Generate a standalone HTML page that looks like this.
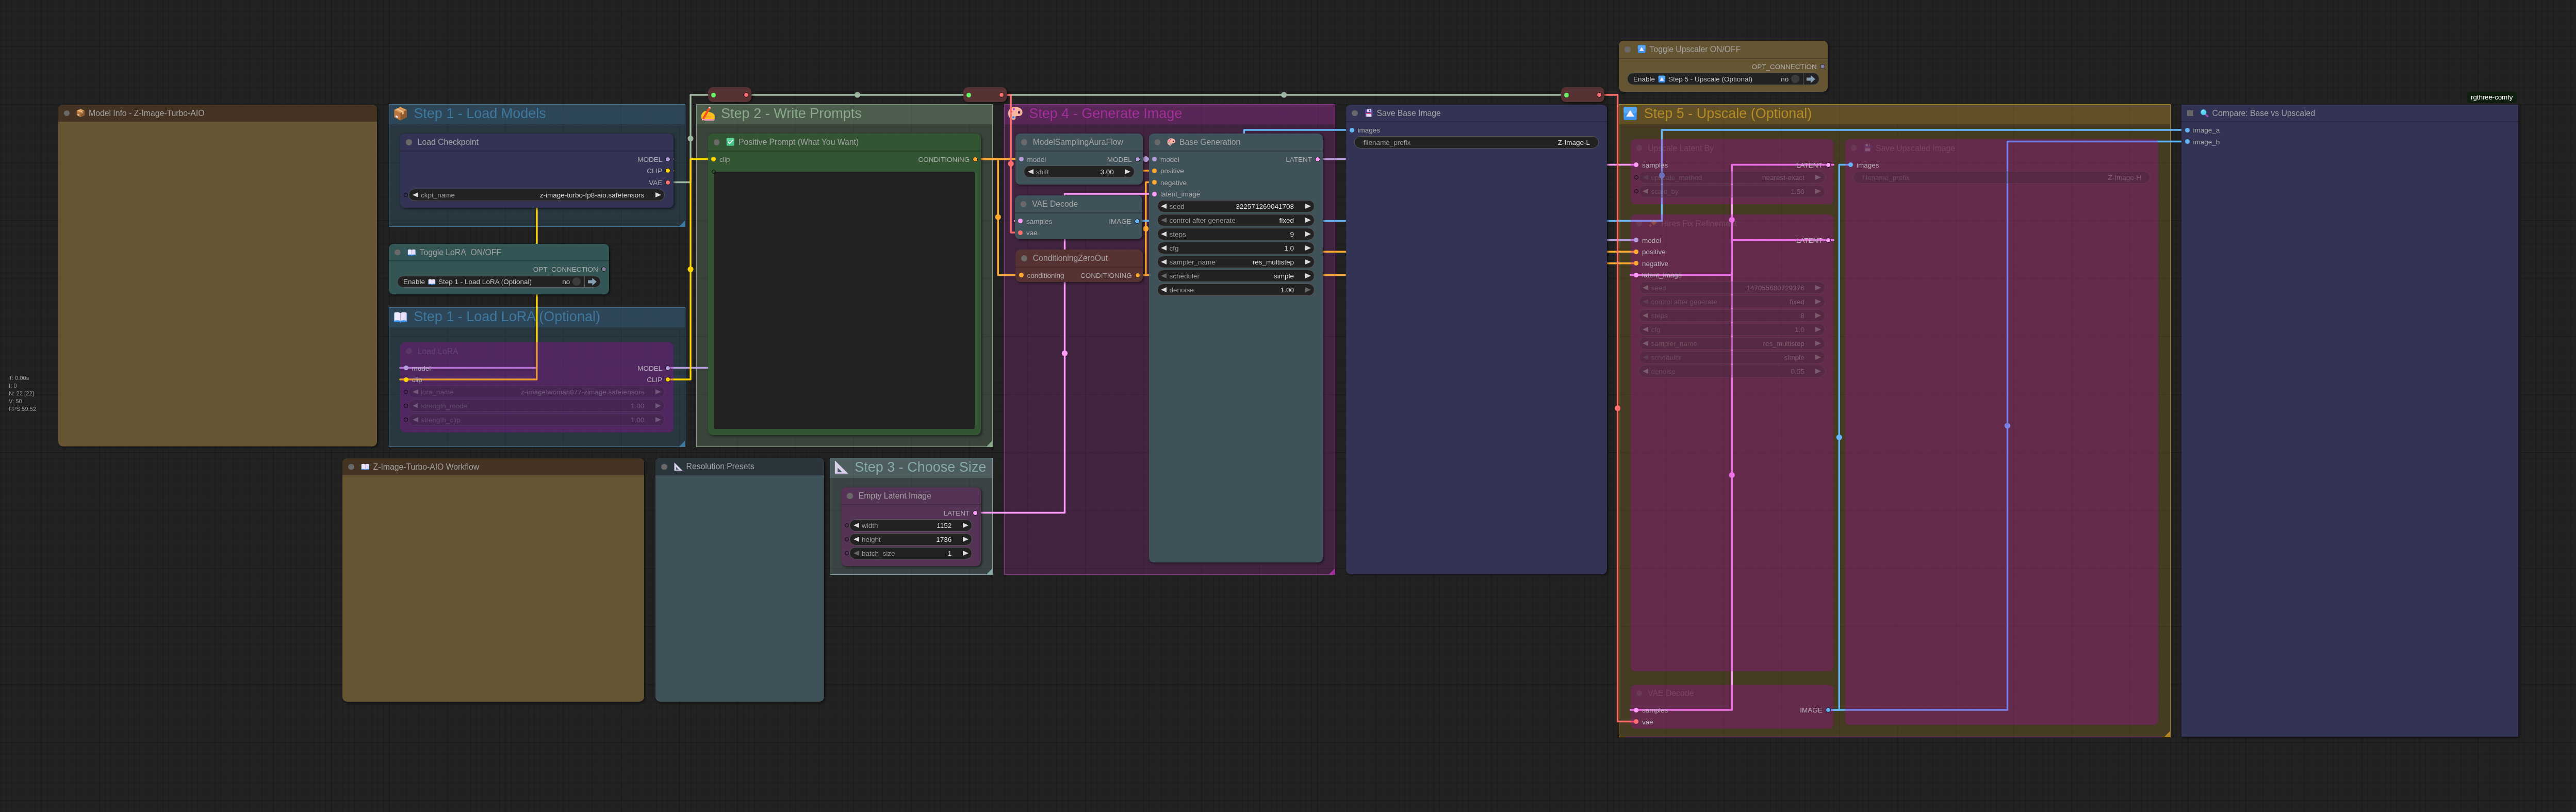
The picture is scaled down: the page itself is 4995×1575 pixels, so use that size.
<!DOCTYPE html>
<html lang="en"><head><meta charset="utf-8"><title>ComfyUI - Z-Image-Turbo-AIO Workflow</title>
<style>
html,body{margin:0;padding:0;background:#222}
#c{position:relative;width:4995px;height:1575px;overflow:hidden;will-change:transform;font-family:"Liberation Sans",Arial,sans-serif;
background-color:#222;
background-image:linear-gradient(90deg,rgba(0,0,0,.11) 2px,transparent 2px),linear-gradient(180deg,rgba(0,0,0,.11) 2px,transparent 2px),linear-gradient(90deg,rgba(0,0,0,.15) 1.200px,transparent 1.200px),linear-gradient(180deg,rgba(0,0,0,.15) 1.200px,transparent 1.200px);
background-size:112.500px 112.500px,112.500px 112.500px,11.250px 11.250px,11.250px 11.250px;
background-position:79px 89.500px,79px 89.500px,79.400px 89.900px,79.400px 89.900px}
#c *{box-sizing:border-box}
.x,.tt,.sl,.wl,.wv{position:absolute;white-space:nowrap;line-height:20px;height:20px}
.ic{position:absolute;display:block}
#links{position:absolute;left:0;top:0}
.g{position:absolute;border:1.300px solid;margin:0}
.gh{position:absolute;left:0;top:0;right:0;height:37.500px}
.gc{position:absolute;right:0;bottom:0;width:0;height:0;border-left:11.250px solid transparent;border-bottom:11.250px solid}
.n{position:absolute;border-radius:9px;box-shadow:2px 2px 5px rgba(0,0,0,.55);margin:0}
.n.box{border-radius:0}
.n.byp{box-shadow:none}
.t{position:absolute;left:0;top:0;right:0;height:33.750px;border-radius:9px 9px 0 0}
.box .t{border-radius:0}
.t.s{height:34.500px;border-bottom:2px solid rgba(0,0,0,.23)}
.td{position:absolute;left:11.250px;top:11.250px;width:11.250px;height:11.250px;border-radius:50%;background:#696969}
.tb{position:absolute;left:11.250px;top:11.250px;width:11.250px;height:11.250px;background:#696969}
.tt{top:7px;font-size:15.750px;color:#a2a2a2}
.byp .td{background:rgba(136,136,136,.17)}
.byp .tt{color:rgba(190,190,190,.19);margin-top:.8px}
.sl{font-size:13.500px;color:#ababab}
.byp .sl{color:#b6b2b6}
.d{position:absolute;width:9px;height:9px;border-radius:50%}
.d.o{width:10px;height:10px;border:1.200px solid #111}
.w{position:absolute;height:23.600px;border-radius:11.800px;background:#222;border:1.100px solid #5c5c5c}
.w.b{background:rgba(34,34,34,.2);border-color:rgba(120,120,120,.2)}
.wl,.wv{top:1.650px;font-size:13.500px}
.wl{color:#999}.wv{color:#ddd}
.b .wl{color:rgba(170,170,170,.28)}.b .wv{color:rgba(221,221,221,.28)}
.al,.ar{position:absolute;top:5.600px;width:0;height:0;border-top:5.600px solid transparent;border-bottom:5.600px solid transparent}
.al{left:6.200px;border-right:11.250px solid #ddd}
.ar{right:6.200px;border-left:11.250px solid #ddd}
.al.dis{border-right-color:#666}.ar.dis{border-left-color:#666}
.b .al{border-right-color:rgba(221,221,221,.28)}.b .ar{border-left-color:rgba(221,221,221,.28)}
.b .al.dis{border-right-color:rgba(120,120,120,.25)}
.ws{position:absolute;width:8px;height:8px;border-radius:50%;border:1.600px solid #050505}
.ta{position:absolute;background:#222;border-radius:3px}
.tg .wv{color:#c4c4c4}
.tc{position:absolute;right:38.200px;top:2.700px;width:16px;height:16px;border-radius:50%;background:#3c3c3c}
.ts{position:absolute;right:30.200px;top:0;width:1px;height:21.400px;background:#5a5a5a}
.rr{border-radius:9px}
#badge{position:absolute;left:4784px;top:178px;width:95.500px;height:22px;border-radius:5px;background:#0f1f0f;color:#fff;font-size:13.500px;line-height:22px;text-align:center;letter-spacing:-.15px}
#stats{position:absolute;left:17px;top:726.300px;margin:0;font-family:"Liberation Sans",Arial,sans-serif;font-size:11.250px;line-height:15.050px;color:#999}
</style></head>
<body><main id="c">
<section class="g" style="left:754px;top:202px;width:575px;height:237.5px;border-color:rgba(63,120,158,.9);background:rgba(63,120,158,.25)">
<div class="gh" style="background:rgba(63,120,158,.25)"></div>
<svg class="ic" style="left:8.2px;top:3.7px;width:27px;height:27px" viewBox="0 0 32 32"><path d="M16 .5 30.500 7.500v16.500L16 31.500 1.500 24V7.500z" fill="#b9773f"/><path d="M16 .5 30.500 7.500 16 14.500 1.500 7.500z" fill="#d99a5b"/><path d="M16 14.500v17l14.500-7.500V7.500z" fill="#8f5a30"/><path d="M8.800 4 23.300 11v5.500l-3.400 1.700v-5.500L5.400 5.700z" fill="#f0c48a"/><path d="M5 19.500l5 2.500v4.200l-5-2.500z" fill="#f3e6f7"/></svg>
<span class="x" style="top:7.24px;font-size:27px;color:#3f789e;left:47.2px;">Step 1 - Load Models</span>
<i class="gc" style="border-bottom-color:#3f789e"></i>
</section>
<section class="g" style="left:754px;top:596px;width:575px;height:271px;border-color:rgba(63,120,158,.9);background:rgba(63,120,158,.25)">
<div class="gh" style="background:rgba(63,120,158,.25)"></div>
<svg class="ic" style="left:8.2px;top:3.7px;width:27px;height:27px" viewBox="0 0 32 32"><path d="M1 8h30v19.500H18.500L16 29.500 13.500 27.500H1z" fill="#3b94ee"/><path d="M2 6.500c5-1.800 10-1.500 14 .8v18.500c-4-2-9-2.300-14-.6z" fill="#efe9fb"/><path d="M30 6.500c-5-1.800-10-1.500-14 .8v18.500c4-2 9-2.300 14-.6z" fill="#e6ddf6"/><path d="M16 7.300v18.500" stroke="#b9a9d6" stroke-width="1.200"/></svg>
<span class="x" style="top:7.24px;font-size:27px;color:#3f789e;left:47.2px;">Step 1 - Load LoRA (Optional)</span>
<i class="gc" style="border-bottom-color:#3f789e"></i>
</section>
<section class="g" style="left:1350px;top:202px;width:575px;height:665px;border-color:rgba(136,170,136,.9);background:rgba(136,170,136,.25)">
<div class="gh" style="background:rgba(136,170,136,.25)"></div>
<svg class="ic" style="left:8.2px;top:3.7px;width:27px;height:27px" viewBox="0 0 32 32"><path d="M1 21C2 14 8 9 14 10l11 4c5 2 7 5 7 10l-1 6c0 1.300-1 2-2 2H10C4 31 0 27 1 21z" fill="#fcc21b"/><path d="M7.500 28.500H31.300l-.3 1.800c0 1-1 1.700-2 1.700H10c-1 0-2-.4-3-1z" fill="#f48fb1"/><path d="M11 21c3-2.500 9-2 13 1.500l-2.500 5c-3-2.500-8-2.500-11 0z" fill="#f9a825"/><path d="M18.800 0 23 2.400 7.200 29.300 2.600 32 3 26.800z" fill="#f4511e"/><path d="M17.500 2.200l4.200 2.400L23 2.400 18.800 0z" fill="#ffcdd2"/><path d="M2.600 32l.4-5.200 4.200 2.500z" fill="#f8bbd0"/></svg>
<span class="x" style="top:7.24px;font-size:27px;color:#88aa88;left:47.1px;">Step 2 - Write Prompts</span>
<i class="gc" style="border-bottom-color:#88aa88"></i>
</section>
<section class="g" style="left:1609px;top:888px;width:316px;height:226.5px;border-color:rgba(136,170,170,.9);background:rgba(136,170,170,.25)">
<div class="gh" style="background:rgba(136,170,170,.25)"></div>
<svg class="ic" style="left:8.2px;top:3.7px;width:27px;height:27px" viewBox="0 0 32 32"><path d="M2.500 1.500 31 30c.6.600.2 1.500-.6 1.500H2.500C1.500 31.500 1 31 1 30V2c0-.8.900-1.100 1.500-.5z" fill="#d9cfe8"/><path d="M7.500 17 17.500 27H7.500z" fill="#46595c"/><path d="M1 29.500h30.500c.4.800 0 2-1.100 2H2.500C1.500 31.500 1 31 1 30z" fill="#b9a9d6"/></svg>
<span class="x" style="top:7.24px;font-size:27px;color:#88aaaa;left:47.2px;">Step 3 - Choose Size</span>
<i class="gc" style="border-bottom-color:#88aaaa"></i>
</section>
<section class="g" style="left:1946.5px;top:202px;width:642.5px;height:912.5px;border-color:rgba(161,48,155,.9);background:rgba(161,48,155,.25)">
<div class="gh" style="background:rgba(161,48,155,.25)"></div>
<svg class="ic" style="left:6.5px;top:2.45px;width:29.5px;height:29.5px" viewBox="0 0 32 32"><path d="M15 2.500C7 2.500 1 8.500 1 16.500c0 7.500 5 13 11.500 13 2.500 0 4-1.200 4-3 0-1.700-.5-2.700.3-3.800 1-1.400 3-1 6-1 5 0 8.200-3 8.200-8C31 7 24 2.500 15 2.500z" fill="#fbb5a0"/><ellipse cx="24" cy="14" rx="2.600" ry="2.900" fill="#5a2a55"/><circle cx="13" cy="7.500" r="2.300" fill="#b44fd8"/><circle cx="7.500" cy="12.500" r="2.200" fill="#f0288a"/><circle cx="7" cy="19.500" r="2.200" fill="#1fb5a8"/><circle cx="12" cy="24.500" r="2.400" fill="#2f8fe8"/></svg>
<span class="x" style="top:7.24px;font-size:27px;color:#a1309b;left:47.7px;">Step 4 - Generate Image</span>
<i class="gc" style="border-bottom-color:#a1309b"></i>
</section>
<section class="g" style="left:3139px;top:202px;width:1070px;height:1227.5px;border-color:rgba(181,139,42,.9);background:rgba(181,139,42,.25)">
<div class="gh" style="background:rgba(181,139,42,.25)"></div>
<svg class="ic" style="left:7.4px;top:3.2px;width:28px;height:28px" viewBox="0 0 32 32"><rect x="1.500" y="1.500" width="29" height="29" rx="4" fill="#3f94f2"/><rect x="1.500" y="1.500" width="29" height="14" rx="4" fill="#56a8f7"/><path d="M16 8.500 25 23H7z" fill="#fbeefd"/></svg>
<span class="x" style="top:7.24px;font-size:27px;color:#b58b2a;left:47.7px;">Step 5 - Upscale (Optional)</span>
<i class="gc" style="border-bottom-color:#b58b2a"></i>
</section>
<svg id="links" width="4995" height="1575" viewBox="0 0 4995 1575" fill="none" stroke-width="3.4" stroke-linejoin="round" stroke-linecap="round">
<path d="M1294.25 308.5 L1305.5 308.5 L1040.75 308.5 L1040.75 713.5 L776 713.5 L787.25 713.5" stroke="#B39DDB"/>
<circle cx="1040.75" cy="511" r="5.6" fill="#B39DDB"/>
<path d="M1294.25 331 L1305.5 331 L1040.75 331 L1040.75 736 L776 736 L787.25 736" stroke="#FFD500"/>
<circle cx="1040.75" cy="533.5" r="5.6" fill="#FFD500"/>
<path d="M1294.25 713.5 L1305.5 713.5 L1637.25 713.5 L1637.25 308.5 L1969 308.5 L1980.25 308.5" stroke="#B39DDB"/>
<circle cx="1637.25" cy="511" r="5.6" fill="#B39DDB"/>
<path d="M1294.25 353.5 L1305.5 353.5 L1339 353.5 L1339 184 L1372.5 184 L1383.75 184" stroke="#9FB8A2"/>
<circle cx="1339" cy="268.75" r="5.6" fill="#9FB8A2"/>
<path d="M1294.25 736 L1305.5 736 L1339 736 L1339 308.5 L1372.5 308.5 L1383.75 308.5" stroke="#FFD500"/>
<circle cx="1339" cy="522.25" r="5.6" fill="#FFD500"/>
<path d="M1446.5 184 L1457.75 184 L1662.62 184 L1662.62 184 L1867.5 184 L1878.75 184" stroke="#9FB8A2"/>
<circle cx="1662.62" cy="184" r="5.6" fill="#9FB8A2"/>
<path d="M1941.5 184 L1952.75 184 L2489.62 184 L2489.62 184 L3026.5 184 L3037.75 184" stroke="#9FB8A2"/>
<circle cx="2489.62" cy="184" r="5.6" fill="#9FB8A2"/>
<path d="M2553.95 308.5 L2565.2 308.5 L2266.35 308.5 L2266.35 428.5 L1967.5 428.5 L1978.75 428.5" stroke="#FF9CF9"/>
<circle cx="2266.35" cy="368.5" r="5.6" fill="#FF9CF9"/>
<path d="M2553.95 308.5 L2565.2 308.5 L2863.35 308.5 L2863.35 319.5 L3161.5 319.5 L3172.75 319.5" stroke="#FF9CF9"/>
<circle cx="2863.35" cy="314" r="5.6" fill="#FF9CF9"/>
<path d="M1890.25 308.5 L1901.5 308.5 L2064.5 308.5 L2064.5 331 L2227.5 331 L2238.75 331" stroke="#FFA931"/>
<circle cx="2064.5" cy="319.75" r="5.6" fill="#FFA931"/>
<path d="M1890.25 308.5 L1901.5 308.5 L1935.25 308.5 L1935.25 533.5 L1969 533.5 L1980.25 533.5" stroke="#FFA931"/>
<circle cx="1935.25" cy="421" r="5.6" fill="#FFA931"/>
<path d="M1890.25 308.5 L1901.5 308.5 L2531.5 308.5 L2531.5 488.3 L3161.5 488.3 L3172.75 488.3" stroke="#FFA931"/>
<circle cx="2531.5" cy="398.4" r="5.6" fill="#FFA931"/>
<path d="M2204.75 308.5 L2216 308.5 L2688.75 308.5 L2688.75 465.8 L3161.5 465.8 L3172.75 465.8" stroke="#B39DDB"/>
<circle cx="2688.75" cy="387.15" r="5.6" fill="#B39DDB"/>
<path d="M2204.75 308.5 L2216 308.5 L2221.75 308.5 L2221.75 308.5 L2227.5 308.5 L2238.75 308.5" stroke="#B39DDB"/>
<circle cx="2221.75" cy="308.5" r="5.6" fill="#B39DDB"/>
<path d="M2204.75 533.5 L2216 533.5 L2221.75 533.5 L2221.75 353.5 L2227.5 353.5 L2238.75 353.5" stroke="#FFA931"/>
<circle cx="2221.75" cy="443.5" r="5.6" fill="#FFA931"/>
<path d="M2204.75 533.5 L2216 533.5 L2688.75 533.5 L2688.75 510.8 L3161.5 510.8 L3172.75 510.8" stroke="#FFA931"/>
<circle cx="2688.75" cy="522.15" r="5.6" fill="#FFA931"/>
<path d="M1890.25 994.5 L1901.5 994.5 L2064.5 994.5 L2064.5 376 L2227.5 376 L2238.75 376" stroke="#FF9CF9"/>
<circle cx="2064.5" cy="685.25" r="5.6" fill="#FF9CF9"/>
<path d="M2203.75 428.5 L2215 428.5 L2412.5 428.5 L2412.5 252 L2610 252 L2621.25 252" stroke="#64B5F6"/>
<circle cx="2412.5" cy="340.25" r="5.6" fill="#64B5F6"/>
<path d="M2203.75 428.5 L2215 428.5 L3222.5 428.5 L3222.5 252 L4230 252 L4241.25 252" stroke="#64B5F6"/>
<circle cx="3222.5" cy="340.25" r="5.6" fill="#64B5F6"/>
<path d="M1941.5 184 L1952.75 184 L1960.12 184 L1960.12 451 L1967.5 451 L1978.75 451" stroke="#FF6E6E"/>
<circle cx="1960.12" cy="317.5" r="5.6" fill="#FF6E6E"/>
<path d="M3100.5 184 L3111.75 184 L3136.62 184 L3136.62 1399.5 L3161.5 1399.5 L3172.75 1399.5" stroke="#FF6E6E"/>
<circle cx="3136.62" cy="791.75" r="5.6" fill="#FF6E6E"/>
<path d="M3543.75 319.5 L3555 319.5 L3358.25 319.5 L3358.25 533.3 L3161.5 533.3 L3172.75 533.3" stroke="#FF9CF9"/>
<circle cx="3358.25" cy="426.4" r="5.6" fill="#FF9CF9"/>
<path d="M3543.75 465.8 L3555 465.8 L3358.25 465.8 L3358.25 1377 L3161.5 1377 L3172.75 1377" stroke="#FF9CF9"/>
<circle cx="3358.25" cy="921.4" r="5.6" fill="#FF9CF9"/>
<path d="M3543.75 1377 L3555 1377 L3566.25 1377 L3566.25 319.5 L3577.5 319.5 L3588.75 319.5" stroke="#64B5F6"/>
<circle cx="3566.25" cy="848.25" r="5.6" fill="#64B5F6"/>
<path d="M3543.75 1377 L3555 1377 L3892.5 1377 L3892.5 274.5 L4230 274.5 L4241.25 274.5" stroke="#64B5F6"/>
<circle cx="3892.5" cy="825.75" r="5.6" fill="#64B5F6"/>
</svg>
<article class="n" style="left:112.5px;top:202.5px;width:618.5px;height:663.5px;background:#665533">
<header class="t" style="background:#443322;">
<i class="td"></i>
<svg class="ic" style="left:35.55px;top:8.32px;width:16.5px;height:16.5px" viewBox="0 0 32 32"><path d="M16 .5 30.500 7.500v16.500L16 31.500 1.500 24V7.500z" fill="#b9773f"/><path d="M16 .5 30.500 7.500 16 14.500 1.500 7.500z" fill="#d99a5b"/><path d="M16 14.500v17l14.500-7.500V7.500z" fill="#8f5a30"/><path d="M8.800 4 23.300 11v5.500l-3.400 1.700v-5.500L5.400 5.700z" fill="#f0c48a"/><path d="M5 19.500l5 2.500v4.200l-5-2.500z" fill="#f3e6f7"/></svg>
<span class="tt" style="left:59.55px">Model Info - Z-Image-Turbo-AIO</span>
</header>
</article>
<article class="n" style="left:664px;top:888.5px;width:585px;height:472.5px;background:#665533">
<header class="t" style="background:#443322;">
<i class="td"></i>
<svg class="ic" style="left:35.55px;top:8.32px;width:16.5px;height:16.5px" viewBox="0 0 32 32"><path d="M1 8h30v19.500H18.500L16 29.500 13.500 27.500H1z" fill="#3b94ee"/><path d="M2 6.500c5-1.800 10-1.500 14 .8v18.500c-4-2-9-2.300-14-.6z" fill="#efe9fb"/><path d="M30 6.500c-5-1.800-10-1.500-14 .8v18.500c4-2 9-2.300 14-.6z" fill="#e6ddf6"/><path d="M16 7.300v18.500" stroke="#b9a9d6" stroke-width="1.200"/></svg>
<span class="tt" style="left:59.55px">Z-Image-Turbo-AIO Workflow</span>
</header>
</article>
<article class="n" style="left:1271px;top:888.3px;width:326.8px;height:472.7px;background:#3f5159">
<header class="t" style="background:#2a363b;">
<i class="td"></i>
<svg class="ic" style="left:35.55px;top:8.32px;width:16.5px;height:16.5px" viewBox="0 0 32 32"><path d="M2.500 1.500 31 30c.6.600.2 1.500-.6 1.500H2.500C1.500 31.500 1 31 1 30V2c0-.8.900-1.100 1.500-.5z" fill="#d9cfe8"/><path d="M7.500 17 17.500 27H7.500z" fill="#46595c"/><path d="M1 29.500h30.500c.4.800 0 2-1.100 2H2.500C1.500 31.500 1 31 1 30z" fill="#b9a9d6"/></svg>
<span class="tt" style="left:59.55px">Resolution Presets</span>
</header>
</article>
<article class="n" style="left:776px;top:259px;width:529.5px;height:143.5px;background:#333355">
<header class="t s" style="">
<i class="td"></i>
<span class="tt" style="left:33.75px">Load Checkpoint</span>
</header>
<i class="d o" style="left:514.05px;top:44.5px;background:#B39DDB"></i>
<span class="sl r" style="right:21.3px;top:40.6px">MODEL</span>
<i class="d o" style="left:514.05px;top:67px;background:#FFD500"></i>
<span class="sl r" style="right:21.3px;top:63.1px">CLIP</span>
<i class="d o" style="left:514.05px;top:89.5px;background:#FF6E6E"></i>
<span class="sl r" style="right:21.3px;top:85.6px">VAE</span>
<div class="w" style="left:16.33px;top:107.2px;width:496.85px"><i class="al"></i><i class="ar"></i><span class="wl" style="left:22.6px">ckpt_name</span><span class="wv" style="right:38.9px">z-image-turbo-fp8-aio.safetensors</span></div><i class="ws" style="left:7.25px;top:115px"></i>
</article>
<article class="n" style="left:754px;top:472.5px;width:427px;height:98.5px;background:#335555">
<header class="t s" style="">
<i class="td"></i>
<svg class="ic" style="left:35.55px;top:8.32px;width:16.5px;height:16.5px" viewBox="0 0 32 32"><path d="M1 8h30v19.500H18.500L16 29.500 13.500 27.500H1z" fill="#3b94ee"/><path d="M2 6.500c5-1.800 10-1.500 14 .8v18.500c-4-2-9-2.300-14-.6z" fill="#efe9fb"/><path d="M30 6.500c-5-1.800-10-1.500-14 .8v18.500c4-2 9-2.300 14-.6z" fill="#e6ddf6"/><path d="M16 7.300v18.500" stroke="#b9a9d6" stroke-width="1.200"/></svg>
<span class="tt" style="left:59.55px">Toggle LoRA&nbsp; ON/OFF</span>
</header>
<i class="d o" style="left:411.55px;top:44.5px;background:#7F7F99"></i>
<span class="sl r" style="right:21.3px;top:40.6px">OPT_CONNECTION</span>
<div class="w tg" style="left:15.57px;top:62.2px;width:395.25px"><span class="wv" style="left:11.5px">Enable</span><svg class="ic" style="left:59.3px;top:3.4px;width:14.8px;height:14.8px" viewBox="0 0 32 32"><path d="M1 8h30v19.500H18.500L16 29.500 13.500 27.500H1z" fill="#3b94ee"/><path d="M2 6.500c5-1.800 10-1.500 14 .8v18.500c-4-2-9-2.300-14-.6z" fill="#efe9fb"/><path d="M30 6.500c-5-1.800-10-1.500-14 .8v18.500c4-2 9-2.300 14-.6z" fill="#e6ddf6"/><path d="M16 7.300v18.500" stroke="#b9a9d6" stroke-width="1.200"/></svg><span class="wv" style="left:79.5px">Step 1 - Load LoRA (Optional)</span><span class="wv" style="right:58.5px">no</span><i class="tc"></i><i class="ts"></i><svg class="ic" style="right:6.2px;top:2.2px;width:18.700px;height:17px;margin-top:.4px" viewBox="0 0 18 16"><path d="M1 5.200h8V.8l8.200 7.200L9 15.200v-4.400H1z" fill="#89a0b3"/></svg></div>
</article>
<article class="n byp" style="left:776px;top:664px;width:529.5px;height:175px;background:rgba(182,0,182,.28)">
<header class="t" style="">
<i class="td"></i>
<span class="tt" style="left:33.75px">Load LoRA</span>
</header>
<i class="d" style="left:6.75px;top:45px;background:#B39DDB"></i>
<span class="sl" style="left:22.5px;top:40.6px">model</span>
<i class="d" style="left:6.75px;top:67.5px;background:#FFD500"></i>
<span class="sl" style="left:22.5px;top:63.1px">clip</span>
<i class="d o" style="left:514.05px;top:44.5px;background:#B39DDB"></i>
<span class="sl r" style="right:21.3px;top:40.6px">MODEL</span>
<i class="d o" style="left:514.05px;top:67px;background:#FFD500"></i>
<span class="sl r" style="right:21.3px;top:63.1px">CLIP</span>
<div class="w b" style="left:16.33px;top:84.2px;width:496.85px"><i class="al"></i><i class="ar"></i><span class="wl" style="left:22.6px">lora_name</span><span class="wv" style="right:38.9px">z-image\woman877-zimage.safetensors</span></div><i class="ws" style="left:7.25px;top:92px"></i>
<div class="w b" style="left:16.33px;top:111.2px;width:496.85px"><i class="al"></i><i class="ar"></i><span class="wl" style="left:22.6px">strength_model</span><span class="wv" style="right:38.9px">1.00</span></div><i class="ws" style="left:7.25px;top:119px"></i>
<div class="w b" style="left:16.33px;top:138.2px;width:496.85px"><i class="al"></i><i class="ar"></i><span class="wl" style="left:22.6px">strength_clip</span><span class="wv" style="right:38.9px">1.00</span></div><i class="ws" style="left:7.25px;top:146px"></i>
</article>
<article class="n" style="left:1372.5px;top:259px;width:529px;height:584.5px;background:#335533">
<header class="t s" style="">
<i class="td"></i>
<svg class="ic" style="left:35.55px;top:8.32px;width:16.5px;height:16.5px" viewBox="0 0 32 32"><rect x="1.500" y="1.500" width="29" height="29" rx="3.500" fill="#4cc38a"/><rect x="1.500" y="1.500" width="29" height="12" rx="3.500" fill="#63d49c"/><path d="M8 16.500 13.500 22 24.500 10" fill="none" stroke="#fff" stroke-width="3.400" stroke-linecap="round" stroke-linejoin="round"/></svg>
<span class="tt" style="left:59.55px">Positive Prompt (What You Want)</span>
</header>
<i class="d" style="left:6.75px;top:45px;background:#FFD500"></i>
<span class="sl" style="left:22.5px;top:40.6px">clip</span>
<i class="d o" style="left:513.55px;top:44.5px;background:#FFA931"></i>
<span class="sl r" style="right:21.3px;top:40.6px">CONDITIONING</span>
<div class="ta" style="left:11.5px;top:74px;width:506px;height:498.500px"></div><i class="ws" style="left:7.250px;top:70px"></i>
</article>
<article class="n" style="left:1631px;top:945px;width:270.5px;height:152.5px;background:#553355">
<header class="t s" style="">
<i class="td"></i>
<span class="tt" style="left:33.75px">Empty Latent Image</span>
</header>
<i class="d o" style="left:255.05px;top:44.5px;background:#FF9CF9"></i>
<span class="sl r" style="right:21.3px;top:40.6px">LATENT</span>
<div class="w" style="left:16.33px;top:62.2px;width:237.85px"><i class="al"></i><i class="ar"></i><span class="wl" style="left:22.6px">width</span><span class="wv" style="right:38.9px">1152</span></div><i class="ws" style="left:7.25px;top:70px"></i>
<div class="w" style="left:16.33px;top:89.2px;width:237.85px"><i class="al"></i><i class="ar"></i><span class="wl" style="left:22.6px">height</span><span class="wv" style="right:38.9px">1736</span></div><i class="ws" style="left:7.25px;top:97px"></i>
<div class="w" style="left:16.33px;top:116.2px;width:237.85px"><i class="al dis"></i><i class="ar"></i><span class="wl" style="left:22.6px">batch_size</span><span class="wv" style="right:38.9px">1</span></div><i class="ws" style="left:7.25px;top:124px"></i>
</article>
<article class="n" style="left:1969px;top:259px;width:247px;height:98.5px;background:#3f5159">
<header class="t s" style="">
<i class="td"></i>
<span class="tt" style="left:33.75px">ModelSamplingAuraFlow</span>
</header>
<i class="d" style="left:6.75px;top:45px;background:#B39DDB"></i>
<span class="sl" style="left:22.5px;top:40.6px">model</span>
<i class="d o" style="left:231.55px;top:44.5px;background:#B39DDB"></i>
<span class="sl r" style="right:21.3px;top:40.6px">MODEL</span>
<div class="w" style="left:16.33px;top:62.2px;width:214.35px"><i class="al"></i><i class="ar"></i><span class="wl" style="left:22.6px">shift</span><span class="wv" style="right:38.9px">3.00</span></div>
</article>
<article class="n" style="left:1967.5px;top:379px;width:247.5px;height:85px;background:#3f5159">
<header class="t s" style="">
<i class="td"></i>
<span class="tt" style="left:33.75px">VAE Decode</span>
</header>
<i class="d" style="left:6.75px;top:45px;background:#FF9CF9"></i>
<span class="sl" style="left:22.5px;top:40.6px">samples</span>
<i class="d" style="left:6.75px;top:67.5px;background:#FF6E6E"></i>
<span class="sl" style="left:22.5px;top:63.1px">vae</span>
<i class="d o" style="left:232.05px;top:44.5px;background:#64B5F6"></i>
<span class="sl r" style="right:21.3px;top:40.6px">IMAGE</span>
</article>
<article class="n" style="left:1969px;top:484px;width:247px;height:62.5px;background:#563332">
<header class="t s" style="">
<i class="td"></i>
<span class="tt" style="left:33.75px">ConditioningZeroOut</span>
</header>
<i class="d" style="left:6.75px;top:45px;background:#FFA931"></i>
<span class="sl" style="left:22.5px;top:40.6px">conditioning</span>
<i class="d o" style="left:231.55px;top:44.5px;background:#FFA931"></i>
<span class="sl r" style="right:21.3px;top:40.6px">CONDITIONING</span>
</article>
<article class="n" style="left:2227.5px;top:259px;width:337.7px;height:832px;background:#3f5159">
<header class="t s" style="">
<i class="td"></i>
<svg class="ic" style="left:35.55px;top:8.32px;width:16.5px;height:16.5px" viewBox="0 0 32 32"><path d="M15 2.500C7 2.500 1 8.500 1 16.500c0 7.500 5 13 11.500 13 2.500 0 4-1.200 4-3 0-1.700-.5-2.700.3-3.800 1-1.400 3-1 6-1 5 0 8.200-3 8.200-8C31 7 24 2.500 15 2.500z" fill="#fbb5a0"/><ellipse cx="24" cy="14" rx="2.600" ry="2.900" fill="#5a2a55"/><circle cx="13" cy="7.500" r="2.300" fill="#b44fd8"/><circle cx="7.500" cy="12.500" r="2.200" fill="#f0288a"/><circle cx="7" cy="19.500" r="2.200" fill="#1fb5a8"/><circle cx="12" cy="24.500" r="2.400" fill="#2f8fe8"/></svg>
<span class="tt" style="left:59.55px">Base Generation</span>
</header>
<i class="d" style="left:6.75px;top:45px;background:#B39DDB"></i>
<span class="sl" style="left:22.5px;top:40.6px">model</span>
<i class="d" style="left:6.75px;top:67.5px;background:#FFA931"></i>
<span class="sl" style="left:22.5px;top:63.1px">positive</span>
<i class="d" style="left:6.75px;top:90px;background:#FFA931"></i>
<span class="sl" style="left:22.5px;top:85.6px">negative</span>
<i class="d" style="left:6.75px;top:112.5px;background:#FF9CF9"></i>
<span class="sl" style="left:22.5px;top:108.1px">latent_image</span>
<i class="d o" style="left:322.25px;top:44.5px;background:#FF9CF9"></i>
<span class="sl r" style="right:21.3px;top:40.6px">LATENT</span>
<div class="w" style="left:16.32px;top:129.2px;width:305.05px"><i class="al"></i><i class="ar"></i><span class="wl" style="left:22.6px">seed</span><span class="wv" style="right:38.9px">322571269041708</span></div>
<div class="w" style="left:16.32px;top:156.2px;width:305.05px"><i class="al dis"></i><i class="ar"></i><span class="wl" style="left:22.6px">control after generate</span><span class="wv" style="right:38.9px">fixed</span></div>
<div class="w" style="left:16.32px;top:183.2px;width:305.05px"><i class="al"></i><i class="ar"></i><span class="wl" style="left:22.6px">steps</span><span class="wv" style="right:38.9px">9</span></div>
<div class="w" style="left:16.32px;top:210.2px;width:305.05px"><i class="al"></i><i class="ar"></i><span class="wl" style="left:22.6px">cfg</span><span class="wv" style="right:38.9px">1.0</span></div>
<div class="w" style="left:16.32px;top:237.2px;width:305.05px"><i class="al"></i><i class="ar"></i><span class="wl" style="left:22.6px">sampler_name</span><span class="wv" style="right:38.9px">res_multistep</span></div>
<div class="w" style="left:16.32px;top:264.2px;width:305.05px"><i class="al dis"></i><i class="ar"></i><span class="wl" style="left:22.6px">scheduler</span><span class="wv" style="right:38.9px">simple</span></div>
<div class="w" style="left:16.32px;top:291.2px;width:305.05px"><i class="al"></i><i class="ar dis"></i><span class="wl" style="left:22.6px">denoise</span><span class="wv" style="right:38.9px">1.00</span></div>
</article>
<article class="n" style="left:2610px;top:202.5px;width:506px;height:911px;background:#333355">
<header class="t s" style="">
<i class="td"></i>
<svg class="ic" style="left:35.55px;top:8.32px;width:16.5px;height:16.5px" viewBox="0 0 32 32"><path d="M2 4.500c0-1.400 1.100-2.500 2.500-2.500H25l5 5v20.500c0 1.400-1.100 2.500-2.500 2.500h-23C3.100 30 2 28.900 2 27.500z" fill="#5b4aa0"/><rect x="9" y="2" width="14" height="9.500" fill="#e6daf3"/><rect x="17.500" y="3.500" width="3.500" height="6.500" fill="#3a2a6a"/><rect x="6.500" y="16.500" width="19" height="13.500" fill="#e8dcf5"/><rect x="6.500" y="16.500" width="19" height="2.600" fill="#f0294e"/></svg>
<span class="tt" style="left:59.55px">Save Base Image</span>
</header>
<i class="d" style="left:6.75px;top:45px;background:#64B5F6"></i>
<span class="sl" style="left:22.5px;top:40.6px">images</span>
<div class="w" style="left:16.32px;top:61.7px;width:473.35px"><span class="wl" style="left:16.48px">filename_prefix</span><span class="wv" style="right:15.68px">Z-Image-L</span></div>
</article>
<article class="n rr" style="left:1372.5px;top:169px;width:84.5px;height:29px;background:#563332">
<i class="d" style="left:6.750px;top:10.500px;background:#66F266"></i><i class="d o" style="right:5.5px;top:9.500px;background:#FF6E6E"></i></article>
<article class="n rr" style="left:1867.5px;top:169px;width:84.5px;height:29px;background:#563332">
<i class="d" style="left:6.750px;top:10.500px;background:#66F266"></i><i class="d o" style="right:5.5px;top:9.500px;background:#FF6E6E"></i></article>
<article class="n rr" style="left:3026.5px;top:169px;width:84.5px;height:29px;background:#563332">
<i class="d" style="left:6.750px;top:10.500px;background:#66F266"></i><i class="d o" style="right:5.5px;top:9.500px;background:#FF6E6E"></i></article>
<article class="n" style="left:3139px;top:79px;width:405px;height:98.5px;background:#665533">
<header class="t s" style="">
<i class="td"></i>
<svg class="ic" style="left:35.55px;top:8.32px;width:16.5px;height:16.5px" viewBox="0 0 32 32"><rect x="1.500" y="1.500" width="29" height="29" rx="4" fill="#3f94f2"/><rect x="1.500" y="1.500" width="29" height="14" rx="4" fill="#56a8f7"/><path d="M16 8.500 25 23H7z" fill="#fbeefd"/></svg>
<span class="tt" style="left:59.55px">Toggle Upscaler ON/OFF</span>
</header>
<i class="d o" style="left:389.55px;top:44.5px;background:#7F7F99"></i>
<span class="sl r" style="right:21.3px;top:40.6px">OPT_CONNECTION</span>
<div class="w tg" style="left:15.57px;top:62.2px;width:373.25px"><span class="wv" style="left:11.5px">Enable</span><svg class="ic" style="left:59.3px;top:3.4px;width:14.8px;height:14.8px" viewBox="0 0 32 32"><rect x="1.500" y="1.500" width="29" height="29" rx="4" fill="#3f94f2"/><rect x="1.500" y="1.500" width="29" height="14" rx="4" fill="#56a8f7"/><path d="M16 8.500 25 23H7z" fill="#fbeefd"/></svg><span class="wv" style="left:79.5px">Step 5 - Upscale (Optional)</span><span class="wv" style="right:58.5px">no</span><i class="tc"></i><i class="ts"></i><svg class="ic" style="right:6.2px;top:2.2px;width:18.700px;height:17px;margin-top:.4px" viewBox="0 0 18 16"><path d="M1 5.200h8V.8l8.200 7.200L9 15.200v-4.400H1z" fill="#89a0b3"/></svg></div>
</article>
<article class="n byp" style="left:3161.5px;top:270px;width:393.5px;height:125.6px;background:rgba(182,0,182,.28)">
<header class="t" style="">
<i class="td"></i>
<span class="tt" style="left:33.75px">Upscale Latent By</span>
</header>
<i class="d" style="left:6.75px;top:45px;background:#FF9CF9"></i>
<span class="sl" style="left:22.5px;top:40.6px">samples</span>
<i class="d o" style="left:378.05px;top:44.5px;background:#FF9CF9"></i>
<span class="sl r" style="right:21.3px;top:40.6px">LATENT</span>
<div class="w b" style="left:16.32px;top:62.2px;width:360.85px"><i class="al dis"></i><i class="ar"></i><span class="wl" style="left:22.6px">upscale_method</span><span class="wv" style="right:38.9px">nearest-exact</span></div><i class="ws" style="left:7.25px;top:70px"></i>
<div class="w b" style="left:16.32px;top:89.2px;width:360.85px"><i class="al"></i><i class="ar"></i><span class="wl" style="left:22.6px">scale_by</span><span class="wv" style="right:38.9px">1.50</span></div><i class="ws" style="left:7.25px;top:97px"></i>
</article>
<article class="n byp" style="left:3161.5px;top:416.3px;width:393.5px;height:886.2px;background:rgba(182,0,182,.28)">
<header class="t" style="">
<i class="td"></i>
<svg class="ic" style="left:35.55px;top:8.32px;width:16.5px;height:16.5px;opacity:0.25" viewBox="0 0 32 32"><path d="M19.500 1Q22.500 10 32 13.500 22.500 17 19.500 26 16.500 17 7 13.500 16.500 10 19.500 1z" fill="#ffb02e"/><path d="M6 18Q7.500 22.500 12 24 7.500 25.500 6 30 4.500 25.500 0 24 4.500 22.500 6 18z" fill="#ff8a3d"/><path d="M7 3Q7.800 6.200 11 7 7.800 7.800 7 11 6.200 7.800 3 7 6.200 6.200 7 3z" fill="#ffb02e"/></svg>
<span class="tt" style="left:59.55px">Hires Fix Refinement</span>
</header>
<i class="d" style="left:6.75px;top:45px;background:#B39DDB"></i>
<span class="sl" style="left:22.5px;top:40.6px">model</span>
<i class="d" style="left:6.75px;top:67.5px;background:#FFA931"></i>
<span class="sl" style="left:22.5px;top:63.1px">positive</span>
<i class="d" style="left:6.75px;top:90px;background:#FFA931"></i>
<span class="sl" style="left:22.5px;top:85.6px">negative</span>
<i class="d" style="left:6.75px;top:112.5px;background:#FF9CF9"></i>
<span class="sl" style="left:22.5px;top:108.1px">latent_image</span>
<i class="d o" style="left:378.05px;top:44.5px;background:#FF9CF9"></i>
<span class="sl r" style="right:21.3px;top:40.6px">LATENT</span>
<div class="w b" style="left:16.32px;top:129.9px;width:360.85px"><i class="al"></i><i class="ar"></i><span class="wl" style="left:22.6px">seed</span><span class="wv" style="right:38.9px">147055680729376</span></div>
<div class="w b" style="left:16.32px;top:156.9px;width:360.85px"><i class="al dis"></i><i class="ar"></i><span class="wl" style="left:22.6px">control after generate</span><span class="wv" style="right:38.9px">fixed</span></div>
<div class="w b" style="left:16.32px;top:183.9px;width:360.85px"><i class="al"></i><i class="ar"></i><span class="wl" style="left:22.6px">steps</span><span class="wv" style="right:38.9px">8</span></div>
<div class="w b" style="left:16.32px;top:210.9px;width:360.85px"><i class="al"></i><i class="ar"></i><span class="wl" style="left:22.6px">cfg</span><span class="wv" style="right:38.9px">1.0</span></div>
<div class="w b" style="left:16.32px;top:237.9px;width:360.85px"><i class="al"></i><i class="ar"></i><span class="wl" style="left:22.6px">sampler_name</span><span class="wv" style="right:38.9px">res_multistep</span></div>
<div class="w b" style="left:16.32px;top:264.9px;width:360.85px"><i class="al dis"></i><i class="ar"></i><span class="wl" style="left:22.6px">scheduler</span><span class="wv" style="right:38.9px">simple</span></div>
<div class="w b" style="left:16.32px;top:291.9px;width:360.85px"><i class="al"></i><i class="ar"></i><span class="wl" style="left:22.6px">denoise</span><span class="wv" style="right:38.9px">0.55</span></div>
</article>
<article class="n byp" style="left:3161.5px;top:1327.5px;width:393.5px;height:85px;background:rgba(182,0,182,.28)">
<header class="t" style="">
<i class="td"></i>
<span class="tt" style="left:33.75px">VAE Decode</span>
</header>
<i class="d" style="left:6.75px;top:45px;background:#FF9CF9"></i>
<span class="sl" style="left:22.5px;top:40.6px">samples</span>
<i class="d" style="left:6.75px;top:67.5px;background:#FF6E6E"></i>
<span class="sl" style="left:22.5px;top:63.1px">vae</span>
<i class="d o" style="left:378.05px;top:44.5px;background:#64B5F6"></i>
<span class="sl r" style="right:21.3px;top:40.6px">IMAGE</span>
</article>
<article class="n byp" style="left:3577.5px;top:270px;width:607.5px;height:1135.5px;background:rgba(182,0,182,.28)">
<header class="t" style="">
<i class="td"></i>
<svg class="ic" style="left:35.55px;top:8.32px;width:16.5px;height:16.5px;opacity:0.25" viewBox="0 0 32 32"><path d="M2 4.500c0-1.400 1.100-2.500 2.500-2.500H25l5 5v20.500c0 1.400-1.100 2.500-2.500 2.500h-23C3.100 30 2 28.900 2 27.500z" fill="#5b4aa0"/><rect x="9" y="2" width="14" height="9.500" fill="#e6daf3"/><rect x="17.500" y="3.500" width="3.500" height="6.500" fill="#3a2a6a"/><rect x="6.500" y="16.500" width="19" height="13.500" fill="#e8dcf5"/><rect x="6.500" y="16.500" width="19" height="2.600" fill="#f0294e"/></svg>
<span class="tt" style="left:59.55px">Save Upscaled Image</span>
</header>
<i class="d" style="left:6.75px;top:45px;background:#64B5F6"></i>
<span class="sl" style="left:22.5px;top:40.6px">images</span>
<div class="w b" style="left:16.32px;top:62.2px;width:574.85px"><span class="wl" style="left:16.48px">filename_prefix</span><span class="wv" style="right:15.68px">Z-Image-H</span></div>
</article>
<article class="n box" style="left:4230px;top:202.5px;width:652.5px;height:1226px;background:#333355">
<header class="t s" style="">
<i class="tb"></i>
<svg class="ic" style="left:35.55px;top:8.32px;width:16.5px;height:16.5px" viewBox="0 0 32 32"><path d="M20 20 28.500 28.500" stroke="#a04fa8" stroke-width="6.500" stroke-linecap="round"/><circle cx="13" cy="13" r="10" fill="#5fd3f3"/><circle cx="13" cy="13" r="10" fill="none" stroke="#39b6e0" stroke-width="2"/><path d="M7 11c.8-3 3-5 6-5.500" stroke="#d8f6ff" stroke-width="2" fill="none" stroke-linecap="round"/></svg>
<span class="tt" style="left:59.55px">Compare: Base vs Upscaled</span>
</header>
<i class="d" style="left:6.75px;top:45px;background:#64B5F6"></i>
<span class="sl" style="left:22.5px;top:40.6px">image_a</span>
<i class="d" style="left:6.75px;top:67.5px;background:#64B5F6"></i>
<span class="sl" style="left:22.5px;top:63.1px">image_b</span>
</article>
<div id="badge">rgthree-comfy</div>
<pre id="stats">T: 0.00s
I: 0
N: 22 [22]
V: 50
FPS:59.52</pre>
</main></body></html>
